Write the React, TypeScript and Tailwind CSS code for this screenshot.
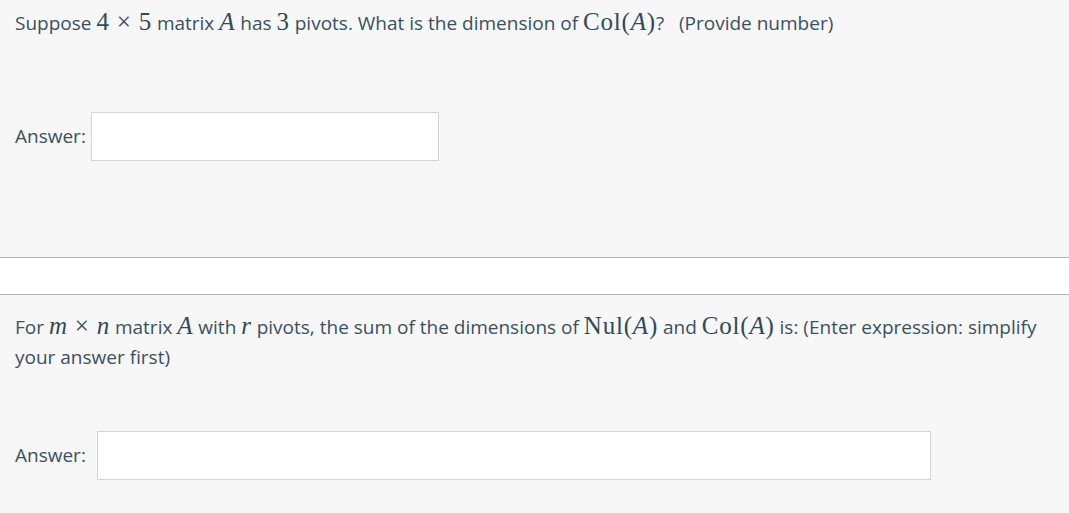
import React from "react";

const M = ({ children, i = false }: { children: React.ReactNode; i?: boolean }) => (
  <span
    className={`font-['Liberation_Serif',serif] text-[25px] leading-none text-[#334a5a] tracking-[0.8px] ${i ? "italic" : ""}`}
  >
    {children}
  </span>
);

const Times = () => <M><span className="mx-[7px]">×</span></M>;

const Answer = ({ width, gap }: { width: string; gap: string }) => (
  <div className="flex items-center">
    <span className={gap}>Answer:</span>
    <input
      type="text"
      className={`h-[49px] ${width} bg-white border border-[#d4d4d4] outline-none px-2`}
    />
  </div>
);

export default function App() {
  return (
    <div className="w-[1069px] h-[513px] overflow-hidden bg-[#f7f7f7] text-[19px] text-[#3b5060] font-['Open_Sans',sans-serif]">
      {/* Question 1 */}
      <section className="h-[257px] px-[15px] pt-[6px]">
        <p className="leading-[34px]">
          Suppose <M>4</M><Times /><M>5</M> matrix <M i>A</M> has <M>3</M> pivots. What is the dimension of{" "}
          <M>
            Col(<i>A</i>)
          </M>
          ? &nbsp;&nbsp;(Provide number)
        </p>
        <div className="mt-[72px]">
          <Answer width="w-[348px]" gap="mr-[5px]" />
        </div>
      </section>

      <div className="h-[38px] bg-white border-y border-[#b5b5b5]" />

      {/* Question 2 */}
      <section className="px-[15px] pt-[17px]">
        <p className="leading-[30px]">
          For <M i>m</M><Times /><M i>n</M> matrix <M i>A</M> with <M i>r</M> pivots, the sum of the dimensions of{" "}
          <M>
            Nul(<i>A</i>)
          </M>{" "}
          and{" "}
          <M>
            Col(<i>A</i>)
          </M>{" "}
          is: (Enter expression: simplify your answer first)
        </p>
        <div className="mt-[59px]">
          <Answer width="w-[834px]" gap="mr-[11px]" />
        </div>
      </section>
    </div>
  );
}
